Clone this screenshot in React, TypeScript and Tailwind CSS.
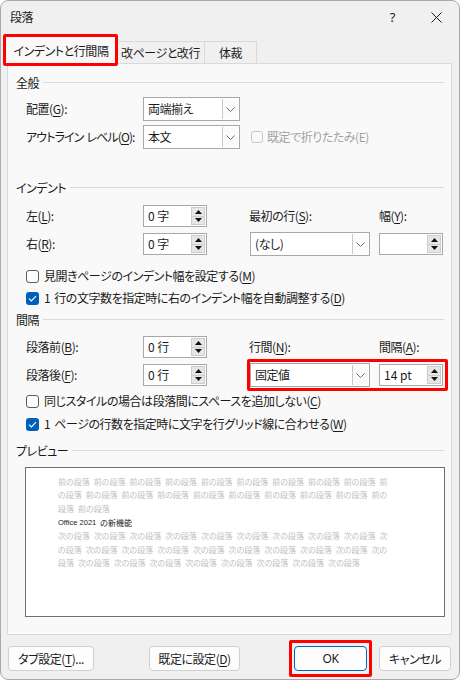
import type { ReactNode } from "react";

const Key = ({ k }: { k: string }) => <span className="underline underline-offset-[2px]">{k}</span>;

function Heading({ title }: { title: string }) {
  return (
    <div className="flex h-[16px] items-center gap-[4px]">
      <span className="whitespace-nowrap leading-[16px]">{title}</span>
      <div className="mt-[-2px] h-px flex-1 bg-[#dadada]" />
    </div>
  );
}

function Chevron() {
  return (
    <svg width="9" height="5" viewBox="0 0 9 5" fill="none">
      <path d="M0.5 0.5 L4.5 4.5 L8.5 0.5" stroke="#6b6b6b" strokeWidth="1" />
    </svg>
  );
}

function Select({ value, w }: { value: string; w: string }) {
  return (
    <div className={`flex h-[24px] shrink-0 items-stretch border border-[#a8a8a8] bg-white ${w}`}>
      <span className="flex flex-1 items-center whitespace-nowrap pl-[4px] leading-none">{value}</span>
      <div className="m-[1px] flex w-[16px] items-center justify-center border-l border-[#c8c8c8] bg-[#fbfbfb]">
        <Chevron />
      </div>
    </div>
  );
}

function Spinner({ value }: { value: string }) {
  return (
    <div className="flex h-[22px] w-[64px] shrink-0 items-center border border-[#a8a8a8] bg-white pl-[4px]">
      <span className="flex-1 whitespace-nowrap leading-none tracking-normal">{value}</span>
      <div className="mr-[1px] flex h-[18px] w-[14px] flex-col border border-[#cdcdcd] bg-[#e6e6e6]">
        <div className="flex flex-1 items-center justify-center border-b border-[#cdcdcd]">
          <svg width="7" height="4" viewBox="0 0 7 4">
            <path d="M3.5 0 L7 4 L0 4 Z" fill="#111" />
          </svg>
        </div>
        <div className="flex flex-1 items-center justify-center">
          <svg width="7" height="4" viewBox="0 0 7 4">
            <path d="M0 0 L7 0 L3.5 4 Z" fill="#111" />
          </svg>
        </div>
      </div>
    </div>
  );
}

function Check({ checked, children }: { checked?: boolean; children: ReactNode }) {
  return (
    <div className="flex h-[16px] items-center pl-[10px]">
      {checked ? (
        <div className="flex h-[13px] w-[13px] shrink-0 items-center justify-center rounded-[3px] bg-[#005fb8]">
          <svg width="9" height="7" viewBox="0 0 9 7" fill="none">
            <path d="M1 3.6 L3.4 6 L8 1.2" stroke="white" strokeWidth="1.1" />
          </svg>
        </div>
      ) : (
        <div className="h-[13px] w-[13px] shrink-0 rounded-[3px] border border-[#5d5d5d] bg-[#fdfdfd]" />
      )}
      <span className="ml-[5px] whitespace-nowrap leading-none">{children}</span>
    </div>
  );
}

function Row({ children }: { children: ReactNode }) {
  return <div className="flex h-[24px] items-center pl-[10px]">{children}</div>;
}

function Label({ w, children }: { w?: string; children: ReactNode }) {
  return <span className={`shrink-0 whitespace-nowrap ${w ?? ""}`}>{children}</span>;
}

const before = "前の段落";
const after = "次の段落";

function PreviewLine({ segs }: { segs: string[] }) {
  return (
    <div className="flex h-[13.6px] items-center gap-[4px] whitespace-nowrap text-[#c2c0bd]">
      {segs.map((s, i) => (
        <span key={i}>{s}</span>
      ))}
    </div>
  );
}

const rep = (s: string, n: number) => Array.from({ length: n }, () => s);

export default function App() {
  return (
    <div className="h-[680px] w-[460px] bg-white">
      <div className="flex h-full flex-col rounded-[8px] border border-[#a9a9a9] bg-[#f0f0f0] font-['Noto_Sans_CJK_JP',sans-serif] text-[12px] tracking-[-0.45px] text-[#1b1b1b] [font-feature-settings:'palt']">
        {/* Title bar */}
        <div className="flex h-[32px] items-center pl-[9px] pr-[17px]">
          <span className="leading-none">段落</span>
          <span className="ml-auto font-['Noto_Sans',sans-serif] text-[13px] leading-none">?</span>
          <svg className="ml-[36px]" width="11" height="11" viewBox="0 0 11 11">
            <path d="M0.5 0.5 L10.5 10.5 M10.5 0.5 L0.5 10.5" stroke="#1b1b1b" strokeWidth="1" />
          </svg>
        </div>

        {/* Tabs */}
        <div className="flex h-[30px] items-end pl-[4px]">
          <div className="relative z-10 mb-[-1px] flex h-[28px] w-[112px] items-center justify-center border border-b-0 border-[#d9d9d9] bg-[#f9f9f9]">
            <span className="whitespace-nowrap leading-none">インデントと行間隔</span>
            <div className="absolute -bottom-[2px] -left-[3px] -right-[2px] -top-[3px] rounded-[2px] border-[3px] border-[#ff0000]" />
          </div>
          <div className="flex h-[22px] w-[88px] items-center justify-center border border-b-0 border-l-0 border-[#d9d9d9] bg-[#f0f0f0]">
            <span className="whitespace-nowrap leading-none">改ページと改行</span>
          </div>
          <div className="flex h-[22px] w-[52px] items-center justify-center border border-b-0 border-l-0 border-[#d9d9d9] bg-[#f0f0f0]">
            <span className="leading-none">体裁</span>
          </div>
        </div>

        {/* Panel */}
        <div className="ml-[6px] flex h-[572px] w-[445px] flex-col border border-[#d9d9d9] bg-[#f9f9f9] pl-[8px] pr-[7px]">
          <div className="mt-[11px]">
            <Heading title="全般" />
          </div>
          <div className="mt-[6px]">
            <Row>
              <Label w="w-[117px]">
                配置(<Key k="G" />):
              </Label>
              <Select value="両端揃え" w="w-[97px]" />
            </Row>
          </div>
          <div className="mt-[4px]">
            <Row>
              <Label w="w-[117px] tracking-[-0.9px]">
                アウトライン<span className="ml-[3px]">レベル</span>(<Key k="O" />):
              </Label>
              <Select value="本文" w="w-[97px]" />
              <div className="ml-[11px] h-[12px] w-[12px] shrink-0 rounded-[3px] border border-[#c6c6c6]" />
              <Label>
                <span className="ml-[4px] text-[#a2a2a2]">既定で折りたたみ(E)</span>
              </Label>
            </Row>
          </div>

          <div className="mt-[31px]">
            <Heading title="インデント" />
          </div>
          <div className="mt-[8px]">
            <Row>
              <Label w="w-[117px]">
                左(<Key k="L" />):
              </Label>
              <Spinner value="0 字" />
              <Label w="ml-[42px] w-[130px]">
                最初の行(<Key k="S" />):
              </Label>
              <Label>
                幅(<Key k="Y" />):
              </Label>
            </Row>
          </div>
          <div className="mt-[4px]">
            <Row>
              <Label w="w-[117px]">
                右(<Key k="R" />):
              </Label>
              <Spinner value="0 字" />
              <div className="ml-[43px] shrink-0">
                <Select value="(なし)" w="w-[120px]" />
              </div>
              <div className="ml-[9px] shrink-0">
                <Spinner value="" />
              </div>
            </Row>
          </div>
          <div className="mt-[12px]">
            <Check>
              見開きページのインデント幅を設定する(<Key k="M" />)
            </Check>
          </div>
          <div className="mt-[6px]">
            <Check checked>
              <span className="mr-[4px]">1</span>行の文字数を指定時に右のインデント幅を自動調整する(<Key k="D" />)
            </Check>
          </div>

          <div className="mt-[6px]">
            <Heading title="間隔" />
          </div>
          <div className="mt-[7px]">
            <Row>
              <Label w="w-[117px]">
                段落前(<Key k="B" />):
              </Label>
              <Spinner value="0 行" />
              <Label w="ml-[42px] w-[130px]">
                行間(<Key k="N" />):
              </Label>
              <Label>
                間隔(<Key k="A" />):
              </Label>
            </Row>
          </div>
          <div className="mt-[4px]">
            <Row>
              <Label w="w-[117px]">
                段落後(<Key k="F" />):
              </Label>
              <Spinner value="0 行" />
              <div className="relative ml-[43px] flex shrink-0 items-center">
                <Select value="固定値" w="w-[120px]" />
                <div className="ml-[9px]">
                  <Spinner value="14 pt" />
                </div>
                <div className="absolute -bottom-[4px] -left-[3px] -right-[5px] -top-[4px] rounded-[2px] border-[3px] border-[#ff0000]" />
              </div>
            </Row>
          </div>
          <div className="mt-[6px]">
            <Check>
              同じスタイルの場合は段落間にスペースを追加しない(<Key k="C" />)
            </Check>
          </div>
          <div className="mt-[7px]">
            <Check checked>
              <span className="mr-[4px]">1</span>ページの行数を指定時に文字を行グリッド線に合わせる(<Key k="W" />)
            </Check>
          </div>

          <div className="mt-[11px]">
            <Heading title="プレビュー" />
          </div>
          <div className="ml-[9px] mt-[8px] h-[150px] w-[420px] border border-[#6f6f6f] bg-white pl-[32px] pt-[7px] text-[8px] leading-none tracking-normal">
            <PreviewLine segs={[...rep(before, 9), "前"]} />
            <PreviewLine segs={["の段落", ...rep(before, 8), "前の"]} />
            <PreviewLine segs={["段落", before]} />
            <div className="flex h-[13.6px] items-center whitespace-nowrap text-[#222]">
              <span className="font-['Liberation_Sans',sans-serif] text-[7.5px]">Office 2021</span>
              <span className="ml-[4px]">の新機能</span>
            </div>
            <PreviewLine segs={[...rep(after, 9), "次"]} />
            <PreviewLine segs={["の段落", ...rep(after, 8), "次の"]} />
            <PreviewLine segs={["段落", ...rep(after, 8)]} />
          </div>
        </div>

        {/* Buttons */}
        <div className="mt-[11px] flex items-center pl-[7px]">
          <button className="h-[25px] w-[86px] whitespace-nowrap rounded-[4px] border border-[#d0d0d0] bg-[#fdfdfd] leading-none">
            タブ設定(<Key k="T" />)...
          </button>
          <button className="ml-[55px] h-[25px] w-[91px] whitespace-nowrap rounded-[4px] border border-[#d0d0d0] bg-[#fdfdfd] leading-none">
            既定に設定(<Key k="D" />)
          </button>
          <div className="relative ml-[54px]">
            <button className="h-[25px] w-[73px] rounded-[4px] border border-[#0067c0] bg-[#fdfdfd] font-['Noto_Sans',sans-serif] leading-none">
              OK
            </button>
            <div className="absolute -bottom-[6px] -left-[5px] -right-[5px] -top-[6px] rounded-[2px] border-[3px] border-[#ff0000]" />
          </div>
          <button className="ml-[12px] h-[25px] w-[72px] whitespace-nowrap rounded-[4px] border border-[#d0d0d0] bg-[#fdfdfd] leading-none">
            キャンセル
          </button>
        </div>
      </div>
    </div>
  );
}
